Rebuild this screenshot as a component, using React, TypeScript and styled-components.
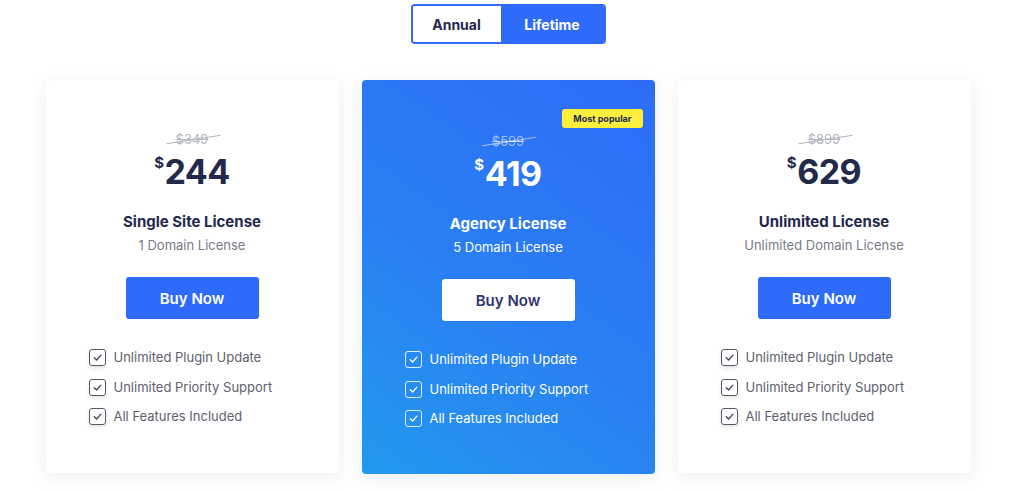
import React from "react";
import styled, { createGlobalStyle, css } from "styled-components";

const GlobalStyle = createGlobalStyle`
  body {
    margin: 0;
    background: #ffffff;
    font-family: "Inter", "Noto Sans", sans-serif;
    color: #23294b;
  }
`;

const Page = styled.div`
  width: 1024px;
  height: 492px;
  display: flex;
  flex-direction: column;
  align-items: center;
  padding-top: 4px;
  padding-right: 8px;
  box-sizing: border-box;
`;

const Toggle = styled.div`
  display: flex;
  width: 195px;
  height: 40px;
  border: 2px solid #2f6bfb;
  border-radius: 4px;
  box-sizing: border-box;
  overflow: hidden;
`;

const ToggleOption = styled.button<{ $active?: boolean }>`
  flex: ${(p) => (p.$active ? "0 0 103px" : "1")};
  border: none;
  font-family: inherit;
  font-size: 14px;
  font-weight: 700;
  cursor: pointer;
  background: ${(p) => (p.$active ? "#2f6bfb" : "#ffffff")};
  color: ${(p) => (p.$active ? "#ffffff" : "#23294b")};
`;

const Cards = styled.div`
  display: flex;
  gap: 23px;
  margin-top: 36px;
`;

const Card = styled.div<{ $featured?: boolean }>`
  position: relative;
  width: 293px;
  height: 393px;
  border-radius: 4px;
  box-sizing: border-box;
  padding-top: 50px;
  display: flex;
  flex-direction: column;
  align-items: center;
  background: #ffffff;
  box-shadow: 0 4px 18px rgba(30, 40, 80, 0.08);
  ${(p) =>
    p.$featured &&
    css`
      height: 394px;
      padding-top: 52px;
      background: linear-gradient(35deg, #2299ee 0%, #2a7ff3 45%, #2d6cf6 100%);
      color: #ffffff;
    `}
`;

const Badge = styled.span`
  position: absolute;
  top: 29px;
  right: 12px;
  background: #fdef3b;
  color: #23294b;
  font-size: 9px;
  font-weight: 700;
  padding: 4px 11px;
  border-radius: 3px;
`;

const OldPrice = styled.div<{ $featured?: boolean }>`
  position: relative;
  font-size: 13px;
  line-height: 18px;
  color: ${(p) => (p.$featured ? "rgba(255,255,255,0.55)" : "#b3b6bf")};
  text-decoration: line-through;

  &::after {
    content: "";
    position: absolute;
    left: -10px;
    right: -12px;
    top: 9px;
    height: 1px;
    background: currentColor;
    transform: rotate(-9deg);
  }
`;

const Price = styled.div<{ $featured?: boolean }>`
  display: flex;
  align-items: flex-start;
  margin-top: 4px;
  font-size: 34px;
  font-weight: 700;
  line-height: 40px;
  letter-spacing: -0.5px;
  color: ${(p) => (p.$featured ? "#ffffff" : "#23294b")};
`;

const Currency = styled.span`
  font-size: 15px;
  line-height: 18px;
  margin-right: 1px;
  margin-top: 2px;
`;

const Title = styled.div`
  margin-top: 20px;
  font-size: 15px;
  font-weight: 700;
  line-height: 20px;
`;

const Subtitle = styled.div<{ $featured?: boolean }>`
  margin-top: 3px;
  font-size: 13px;
  line-height: 20px;
  color: ${(p) => (p.$featured ? "#ffffff" : "#777b88")};
`;

const BuyButton = styled.button<{ $featured?: boolean }>`
  margin-top: 22px;
  width: 133px;
  height: 42px;
  border: none;
  border-radius: 3px;
  font-family: inherit;
  font-size: 15px;
  font-weight: 600;
  cursor: pointer;
  background: ${(p) => (p.$featured ? "#ffffff" : "#2f6bfb")};
  color: ${(p) => (p.$featured ? "#2f3470" : "#ffffff")};
`;

const Features = styled.ul`
  list-style: none;
  margin: 29px 0 0;
  padding: 0;
  align-self: flex-start;
  margin-left: 43px;
  display: flex;
  flex-direction: column;
  gap: 10.5px;
`;

const Feature = styled.li<{ $featured?: boolean }>`
  display: flex;
  align-items: center;
  gap: 8px;
  font-size: 13px;
  line-height: 19px;
  color: ${(p) => (p.$featured ? "#ffffff" : "#5d616e")};
`;

const Check = styled.span<{ $featured?: boolean }>`
  width: 17px;
  height: 17px;
  box-sizing: border-box;
  border-radius: 3px;
  display: flex;
  align-items: center;
  justify-content: center;
  border: ${(p) => (p.$featured ? "1px solid rgba(255,255,255,0.85)" : "1.5px solid #555a68")};
  box-shadow: ${(p) => (p.$featured ? "none" : "0 2px 4px rgba(0,0,0,0.12)")};
  color: ${(p) => (p.$featured ? "#ffffff" : "#3c4150")};
`;

const CheckIcon = () => (
  <svg width="11" height="11" viewBox="0 0 12 12" fill="none">
    <path d="M2.5 6.3 L5 8.7 L9.7 3.4" stroke="currentColor" strokeWidth="1.4" strokeLinecap="round" strokeLinejoin="round" />
  </svg>
);

const plans = [
  { old: "$349", price: "244", title: "Single Site License", sub: "1 Domain License" },
  { old: "$599", price: "419", title: "Agency License", sub: "5 Domain License", featured: true },
  { old: "$899", price: "629", title: "Unlimited License", sub: "Unlimited Domain License" },
];

const features = ["Unlimited Plugin Update", "Unlimited Priority Support", "All Features Included"];

export default function App() {
  return (
    <>
      <GlobalStyle />
      <Page>
        <Toggle>
          <ToggleOption>Annual</ToggleOption>
          <ToggleOption $active>Lifetime</ToggleOption>
        </Toggle>
        <Cards>
          {plans.map((p) => (
            <Card key={p.title} $featured={p.featured}>
              {p.featured && <Badge>Most popular</Badge>}
              <OldPrice $featured={p.featured}>{p.old}</OldPrice>
              <Price $featured={p.featured}>
                <Currency>$</Currency>
                {p.price}
              </Price>
              <Title>{p.title}</Title>
              <Subtitle $featured={p.featured}>{p.sub}</Subtitle>
              <BuyButton $featured={p.featured}>Buy Now</BuyButton>
              <Features>
                {features.map((f) => (
                  <Feature key={f} $featured={p.featured}>
                    <Check $featured={p.featured}>
                      <CheckIcon />
                    </Check>
                    {f}
                  </Feature>
                ))}
              </Features>
            </Card>
          ))}
        </Cards>
      </Page>
    </>
  );
}
